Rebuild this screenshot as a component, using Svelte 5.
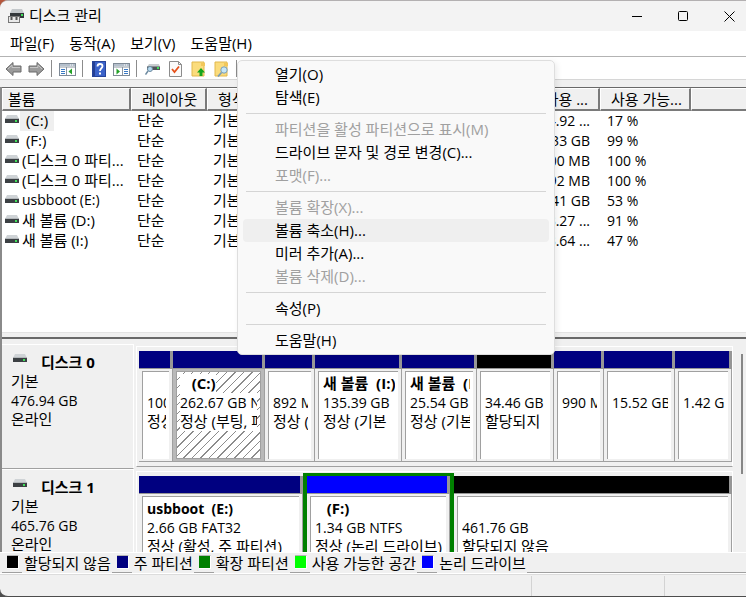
<script>
  const menus = ['파일(F)', '동작(A)', '보기(V)', '도움말(H)'];
  const tools = ['back', 'forward', '|', 'tree', '|', 'help', 'panel', '|', 'drive', 'check', 'up', 'find', '|'];
  const toolNames = {
    back: '뒤로', forward: '앞으로', tree: '콘솔 트리', help: '도움말', panel: '작업 창',
    drive: '디스크', check: '속성', up: '위로', find: '찾기'
  };
  const columns = [
    { label: '볼륨', width: 129 },
    { label: '레이아웃', width: 76 },
    { label: '형식', width: 76 },
    { label: '파일 시스템', width: 90 },
    { label: '상태', width: 70 },
    { label: '용량', width: 79 },
    { label: '사용 ...', width: 78, right: true },
    { label: '사용 가능...', width: 91 },
    { label: '', width: 0 }
  ];
  const volumes = [
    { name: ' (C:)', free: '44.92 ...', pct: '17 %', selected: true },
    { name: ' (F:)', free: '1.33 GB', pct: '99 %' },
    { name: '(디스크 0 파티...', free: '100 MB', pct: '100 %' },
    { name: '(디스크 0 파티...', free: '892 MB', pct: '100 %' },
    { name: 'usbboot (E:)', free: '1.41 GB', pct: '53 %', latin: true },
    { name: '새 볼륨 (D:)', free: '23.27 ...', pct: '91 %' },
    { name: '새 볼륨 (I:)', free: '63.64 ...', pct: '47 %' }
  ];
  const disks = [
    {
      name: '디스크 0', size: '476.94 GB',
      parts: [
        { w: 34, kind: 'primary', title: '', size: '100 MB', state: '정상 (EFI)' },
        { w: 92, kind: 'primary', title: '   (C:)', size: '262.67 GB NTFS', state: '정상 (부팅, 페이지 파일)', selected: true },
        { w: 50, kind: 'primary', title: '', size: '892 MB', state: '정상 (복구)' },
        { w: 87, kind: 'primary', title: '새 볼륨  (I:)', size: '135.39 GB', state: '정상 (기본' },
        { w: 75, kind: 'primary', title: '새 볼륨  (D:)', size: '25.54 GB', state: '정상 (기본' },
        { w: 77, kind: 'free', title: '', size: '34.46 GB', state: '할당되지' },
        { w: 50, kind: 'primary', title: '', size: '990 MB', state: '' },
        { w: 71, kind: 'primary', title: '', size: '15.52 GB', state: '' },
        { w: 57, kind: 'primary', title: '', size: '1.42 GB', state: '' }
      ]
    },
    {
      name: '디스크 1', size: '465.76 GB',
      parts: [
        { w: 164, kind: 'primary', title: 'usbboot  (E:)', size: '2.66 GB FAT32', state: '정상 (활성, 주 파티션)', latin: true },
        { w: 143, kind: 'logical', title: '   (F:)', size: '1.34 GB NTFS', state: '정상 (논리 드라이브)', extended: true },
        { w: 278, kind: 'free', title: '', size: '461.76 GB', state: '할당되지 않음' }
      ]
    }
  ];
  const legend = [
    { color: '#000000', label: '할당되지 않음' },
    { color: '#000080', label: '주 파티션' },
    { color: '#008000', label: '확장 파티션' },
    { color: '#00ff00', label: '사용 가능한 공간' },
    { color: '#0000ff', label: '논리 드라이브' }
  ];
  const context = [
    { label: '열기(O)' },
    { label: '탐색(E)' },
    null,
    { label: '파티션을 활성 파티션으로 표시(M)', off: true },
    { label: '드라이브 문자 및 경로 변경(C)...' },
    { label: '포맷(F)...', off: true },
    null,
    { label: '볼륨 확장(X)...', off: true },
    { label: '볼륨 축소(H)...', hot: true },
    { label: '미러 추가(A)...' },
    { label: '볼륨 삭제(D)...', off: true },
    null,
    { label: '속성(P)' },
    null,
    { label: '도움말(H)' }
  ];
</script>

{#snippet driveIcon()}
  <svg class="drive" width="14" height="8" viewBox="0 0 14 8" aria-hidden="true">
    <path d="M2 0h10l2 4H0z" fill="#cfd3d6" />
    <path d="M0 4h14v4H0z" fill="#3c4043" />
    <path d="M0 3.500h14" stroke="#b4b8bb" />
    <rect x="10" y="5" width="2" height="2" fill="#3fe05a" />
  </svg>
{/snippet}

{#snippet consoleIcon(flip)}
  <svg width="17" height="16" viewBox="0 0 17 16" aria-hidden="true">
    <rect x=".5" y="2.500" width="16" height="12" fill="#fff" stroke="#7f8a96" />
    <path d="M1 3h15v2H1z" fill="#b5c0cc" />
    <path d="M11 4h1m1 0h1" stroke="#fff" />
    <path d="M1 6h15" stroke="#8b96a2" />
    {#if flip}
      <path d="M9.500 6v8" stroke="#8b96a2" />
      <path d="M11 8.500h4m-4 2h4m-4 2h4" stroke="#3979c4" />
      <path d="M3.500 7.500v6L7 10.500z" fill="#23a126" />
    {:else}
      <path d="M7.500 6v8" stroke="#8b96a2" />
      <path d="M2 8.500h4m-4 2h4m-4 2h4" stroke="#3979c4" />
      <path d="M13 7.500v6l-3.500-3z" fill="#23a126" />
    {/if}
  </svg>
{/snippet}

{#snippet folder()}
  <path d="M1 1h12v14H1z" fill="#fbdc7c" stroke="#e2b84c" />
  <path d="M10 2h4v3h-4z" fill="#f2c75a" />
{/snippet}

<div class="window">
  <header class="title">
    <svg width="16" height="16" viewBox="0 0 16 16" aria-hidden="true">
      <path d="M4 1h10l2 4H2z" fill="#c4c8cb" />
      <path d="M2 5h14v5H2z" fill="#34383b" />
      <rect x="13" y="6" width="2" height="2" fill="#3fe05a" />
      <rect x=".5" y="8.500" width="11" height="6" fill="#e9e9e9" stroke="#777" />
      <path d="M3.500 9v3m5-3v3" stroke="#555" stroke-width="2" />
    </svg>
    <h1>디스크 관리</h1>
    <div class="controls">
      <button aria-label="최소화"><svg width="11" height="11" viewBox="0 0 11 11"><path d="M0 5.500h10" /></svg></button>
      <button aria-label="최대화"><svg width="11" height="11" viewBox="0 0 11 11"><rect x=".5" y=".5" width="9" height="9" rx="1" /></svg></button>
      <button aria-label="닫기"><svg width="11" height="11" viewBox="0 0 11 11"><path d="M.5.5l10 10m0-10l-10 10" /></svg></button>
    </div>
  </header>

  <nav class="menubar">
    {#each menus as m}<button>{m}</button>{/each}
  </nav>

  <div class="toolbar">
    {#each tools as t}
      {#if t === '|'}
        <span class="split"></span>
      {:else}
        <button aria-label={toolNames[t]}>
          {#if t === 'back' || t === 'forward'}
            <svg width="17" height="16" viewBox="0 0 17 16" class:flip={t === 'forward'}>
              <path d="M1 8l7-6.500V5h8v6H8v3.500z" fill="#9b9b9b" stroke="#6a6a6a" />
              <path d="M3 8l4-4v2.500h8" fill="none" stroke="#c4c4c4" />
            </svg>
          {:else if t === 'tree'}
            {@render consoleIcon(false)}
          {:else if t === 'panel'}
            {@render consoleIcon(true)}
          {:else if t === 'help'}
            <svg width="14" height="16" viewBox="0 0 14 16">
              <rect x=".5" y=".5" width="13" height="15" fill="#3b62c9" stroke="#26439a" />
              <path d="M1 1h2v14H1z" fill="#243f94" />
              <path d="M5.500 5.500c0-3.400 5-3.200 5-.2 0 2-2.500 2-2.500 4.700" fill="none" stroke="#fff" stroke-width="1.800" />
              <rect x="7" y="11.500" width="2" height="2" fill="#fff" />
            </svg>
          {:else if t === 'drive'}
            <svg width="16" height="16" viewBox="0 0 16 16">
              <path d="M4 3h10l1 3H2z" fill="#c9cdd0" />
              <path d="M2 5.500h13V9H2z" fill="#505559" />
              <rect x="12" y="6" width="2" height="2" fill="#3fe05a" />
              <circle cx="5" cy="8" r="2.500" fill="#b5d9ef" stroke="#6d8aa0" />
              <path d="M3 10l-2.500 3.500" stroke="#6d8aa0" stroke-width="1.500" />
            </svg>
          {:else if t === 'check'}
            <svg width="13" height="16" viewBox="0 0 13 16">
              <path d="M.5.500h9l3 3v12H.5z" fill="#fafafa" stroke="#8c8c8c" />
              <path d="M9.500.500v3h3" fill="none" stroke="#8c8c8c" />
              <path d="M3 8l2.500 3L10 5.500" fill="none" stroke="#e5501a" stroke-width="1.800" />
            </svg>
          {:else if t === 'up'}
            <svg width="15" height="16" viewBox="0 0 15 16">
              {@render folder()}
              <path d="M10 7l4 4.500h-2.500V15h-3v-3.500H6z" fill="#16a51c" />
            </svg>
          {:else}
            <svg width="15" height="16" viewBox="0 0 15 16">
              {@render folder()}
              <circle cx="10" cy="9" r="3.200" fill="#c5e6f7" stroke="#7b9db5" />
              <path d="M7.500 11.500l-3.500 4" stroke="#7b9db5" stroke-width="1.800" />
            </svg>
          {/if}
        </button>
      {/if}
    {/each}
  </div>

  <main>
    <section class="volumes">
      <table>
        <colgroup>
          {#each columns as c}<col style={c.width ? `width:${c.width}px` : ''} />{/each}
        </colgroup>
        <thead>
          <tr>{#each columns as c}<th class:right={c.right}>{c.label}</th>{/each}</tr>
        </thead>
        <tbody>
          {#each volumes as v}
            <tr>
              <td class="name">{@render driveIcon()}<span class:selected={v.selected} class:latin={v.latin}>{v.name}</span></td>
              <td>단순</td>
              <td>기본</td>
              <td></td>
              <td></td>
              <td></td>
              <td class="right latin">{v.free}</td>
              <td class="latin">{v.pct}</td>
              <td></td>
            </tr>
          {/each}
        </tbody>
      </table>
    </section>

    <section class="disks">
      <div class="rows">
        {#each disks as d}
          <article class="disk">
            <div class="info">
              <h2>{@render driveIcon()}{d.name}</h2>
              <p>기본</p>
              <p class="latin">{d.size}</p>
              <p>온라인</p>
            </div>
            <div class="parts">
              {#each d.parts as p}
                <div class="part" class:extended={p.extended} class:selected={p.selected} style={`flex-grow:${p.w}`}>
                  <div class={['bar', p.kind]}></div>
                  <div class="body">
                    <div class="box">
                      <div class="clip">
                        <p class="bold" class:latin={p.latin}><span>{p.title}</span></p>
                        <p class="latin"><span>{p.size}</span></p>
                        <p><span>{p.state}</span></p>
                      </div>
                    </div>
                  </div>
                </div>
              {/each}
            </div>
          </article>
        {/each}
      </div>
      <div class="scroll"><span></span></div>
    </section>
  </main>

  <div class="legend">
    {#each legend as l}
      <span class="key"><i style={`background:${l.color}`}></i></span><span class="word">{l.label}</span>
    {/each}
    <span class="rest"></span>
  </div>
  <footer><span></span><span></span><span></span></footer>

  <div class="context" role="menu">
    {#each context as c}
      {#if c}
        <button role="menuitem" disabled={c.off} class:hot={c.hot}>{c.label}</button>
      {:else}
        <hr />
      {/if}
    {/each}
  </div>
</div>

<style>
  :global(body) {
    background: linear-gradient(to right, #b5563c 0, #b5563c 64px, #b0a9ac 66px) top / 100% 12px no-repeat, #4d4d4d;
  }
  * {
    box-sizing: border-box;
  }
  .window {
    position: relative;
    display: flex;
    flex-direction: column;
    height: 100vh;
    border-top: 1px solid #b3b0b1;
    border-bottom: 1px solid #4d4d4d;
    border-radius: 8px 0 0 8px;
    overflow: hidden;
    background: #f0f0f0;
    color: #000;
    font: 15px/20px "Open Sans", "Noto Sans CJK KR", sans-serif;
    white-space: nowrap;
  }
  .latin {
    font-size: 14px;
  }
  button {
    border: 0;
    padding: 0;
    background: none;
    color: inherit;
    font: inherit;
  }
  h1, h2, p {
    margin: 0;
    font-size: 15px;
    font-weight: 400;
  }
  .title {
    display: flex;
    align-items: center;
    gap: 5px;
    height: 30px;
    padding: 0 2px 0 8px;
    background: #f3f3f3;
  }
  h1 {
    padding-bottom: 2px;
  }
  .controls {
    display: flex;
    gap: 16px;
    margin-left: auto;
  }
  .controls button {
    display: grid;
    place-items: center;
    width: 30px;
    height: 30px;
  }
  .controls svg {
    fill: none;
    stroke: #000;
  }
  .menubar {
    display: flex;
    height: 26px;
    padding-left: 2px;
    border-bottom: 1px solid #b3b3b3;
    background: #fff;
  }
  .menubar button {
    padding: 0 7px 2px 8px;
  }
  .toolbar {
    display: flex;
    height: 23px;
    padding-left: 2px;
    border-bottom: 1px solid #d6d6d6;
    background: #fff;
  }
  .toolbar button {
    display: grid;
    place-items: center;
    width: 23px;
    height: 24px;
  }
  .flip {
    transform: scaleX(-1);
  }
  .split {
    width: 5px;
    margin: 3px 0 2px 3px;
    border-left: 1px solid #8c8c8c;
  }
  main {
    display: flex;
    flex: 1;
    flex-direction: column;
    min-height: 0;
    margin-top: 7px;
    border-left: 2px solid #8a8a8a;
  }
  .volumes {
    flex: 244 1 0;
    min-height: 0;
    overflow: hidden;
    border-top: 1px solid #696969;
    border-bottom: 1px solid #e3e3e3;
    background: #fff;
  }
  table {
    width: 100%;
    table-layout: fixed;
    border-collapse: separate;
    border-spacing: 0;
  }
  th {
    height: 23px;
    padding: 0 6px 0 10px;
    overflow: hidden;
    border: solid;
    border-width: 1px 2px 2px 1px;
    border-color: #fff #7a7a7a #7a7a7a #fff;
    background: #f0f0f0;
    font-weight: 400;
    line-height: 20px;
    text-align: left;
  }
  th:first-child {
    padding-left: 5px;
  }
  th:last-child {
    border-right: 0;
  }
  td {
    height: 20px;
    padding: 0 6px 2px;
    line-height: 18px;
  }
  td.latin {
    padding-bottom: 0;
    padding-left: 7px;
    line-height: 20px;
  }
  th.right, td.right {
    padding-right: 10px;
    text-align: right;
  }
  .name {
    display: flex;
    align-items: center;
    gap: 1px;
    padding: 0 0 0 3px;
    white-space: pre;
  }
  .name span {
    height: 20px;
    padding: 0 2px;
  }
  .name .selected {
    padding-right: 6px;
    background: #efefef;
  }
  .drive {
    flex: none;
    margin-bottom: 5px;
  }
  .disks {
    display: flex;
    flex: 208 1 0;
    min-height: 0;
    margin-top: 4px;
    padding-top: 5px;
    border-top: 2px solid #696969;
    overflow: hidden;
  }
  .rows {
    flex: 1;
    min-width: 0;
  }
  .disk {
    display: flex;
    height: 125px;
  }
  .info {
    width: 132px;
    padding: 7px 0 0 9px;
    border: solid;
    border-width: 1px 0;
    border-color: #fff transparent #a0a0a0;
    border-right: 1px solid #fff;
  }
  .info h2 {
    display: flex;
    align-items: center;
    gap: 14px;
    padding-left: 2px;
    font-weight: 700;
    line-height: 20px;
  }
  .info .drive {
    margin-bottom: 8px;
  }
  .info p {
    line-height: 19px;
  }
  p.latin {
    font-size: 14px;
  }
  .parts {
    display: flex;
    flex: 1;
    min-width: 0;
    margin: 2px 0 2px 2px;
    padding: 4px 0 4px 2px;
    border: solid;
    border-width: 1px;
    border-color: #fff #fff #a0a0a0;
  }
  .part {
    display: flex;
    flex: 1 1 0;
    flex-direction: column;
    min-width: 0;
  }
  .extended {
    margin-top: -3px;
    border: solid #008000;
    border-width: 3px 4px 0;
  }
  .bar {
    height: 18px;
    border: solid;
    border-width: 0 3px 1px 0;
    border-color: #969696;
  }
  .primary {
    background: #000080;
  }
  .logical {
    background: #0000ff;
  }
  .free {
    background: #000;
  }
  .body {
    display: flex;
    flex: 1;
    min-height: 0;
    padding: 2px 3px;
    border: solid #a0a0a0;
    border-width: 0 1px 1px 0;
  }
  .box {
    flex: 1;
    min-width: 0;
    padding: 2px 3px 0 4px;
    border: solid #a0a0a0;
    border-width: 1px 0 0 1px;
    background: #fff;
  }
  .part.selected .body {
    background: #b9b9b9;
  }
  .part.selected .box {
    border-width: 1px;
    padding-left: 3px;
    background: repeating-linear-gradient(135deg, #fff 0 5px, #8c8c8c 5px 6px);
  }
  .part.selected span {
    display: inline-block;
    background: #fff;
  }
  .clip {
    overflow: hidden;
  }
  .clip p {
    height: 19px;
    line-height: 19px;
    white-space: pre;
  }
  .clip .bold {
    font-weight: 700;
  }
  .scroll {
    width: 13px;
    padding: 10px 3px 0 8px;
  }
  .scroll span {
    display: block;
    height: 120px;
    background: #868686;
  }
  .legend {
    display: flex;
    height: 22px;
    padding-left: 2px;
    border-top: 1px solid #fff;
    border-bottom: 1px solid #fff;
  }
  .key {
    display: flex;
    width: 20px;
    padding: 2px 3px 0 5px;
    border-bottom: 1px solid #a0a0a0;
  }
  .key i {
    width: 12px;
    height: 14px;
    border: solid;
    border-width: 1px 1px 1px 0;
    border-color: #b5b5b5 #fff #fff;
  }
  .word {
    padding: 0 1px 0 2px;
  }
  .rest {
    flex: 1;
    border-bottom: 1px solid #a0a0a0;
  }
  footer {
    display: flex;
    height: 22px;
    border-top: 1px solid #dcdcdc;
  }
  footer span {
    flex: 133 1 0;
    margin-top: 1px;
    border-right: 1px solid #d3d3d3;
  }
  footer span:first-child {
    flex-grow: 532;
  }
  footer span:last-child {
    flex-grow: 81;
    border: 0;
  }
  .context {
    position: absolute;
    top: 59px;
    left: 237px;
    display: flex;
    flex-direction: column;
    width: 318px;
    padding: 2px 5px;
    border: 1px solid #dedede;
    border-radius: 5px;
    background: #f9f9f9;
    box-shadow: 2px 2px 6px rgba(0, 0, 0, 0.08);
  }
  .context button {
    height: 23px;
    padding-left: 32px;
    border-radius: 4px;
    line-height: 23px;
    text-align: left;
  }
  .context button:disabled {
    color: #a0a0a0;
  }
  .context .hot {
    background: #efefef;
  }
  .context hr {
    align-self: stretch;
    height: 1px;
    margin: 4px 3px;
    border: 0;
    background: #d5d5d5;
  }
</style>
